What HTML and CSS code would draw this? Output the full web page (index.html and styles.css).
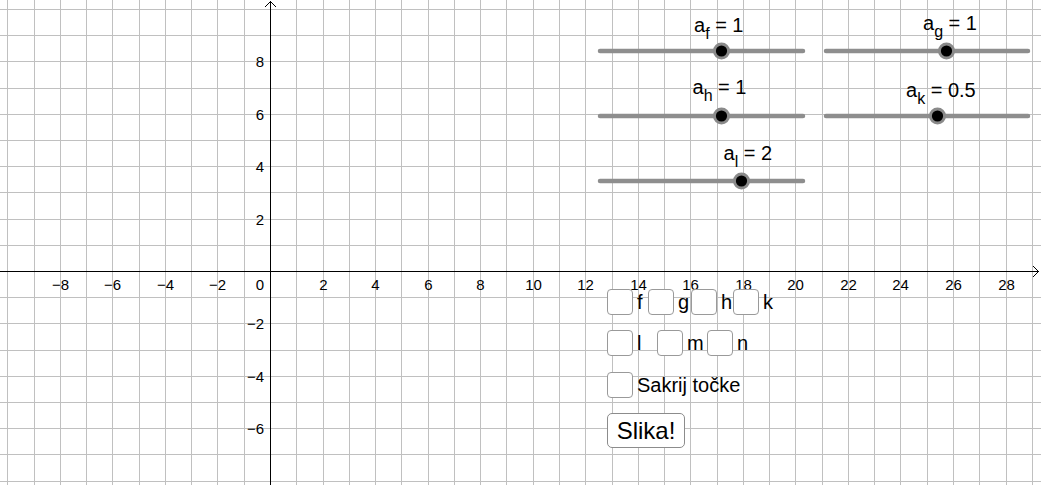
FILE: index.html
```html
<!DOCTYPE html>
<html lang="hr">
<head>
<meta charset="utf-8">
<title>GeoGebra</title>
<link rel="stylesheet" href="styles.css">
</head>
<body>
<div class="applet">
  <svg class="canvas" width="1041" height="485" viewBox="0 0 1041 485" xmlns="http://www.w3.org/2000/svg">
    <path class="grid" d="M7.5 0V485M34.5 0V485M60.5 0V485M86.5 0V485M112.5 0V485M139.5 0V485M165.5 0V485M191.5 0V485M217.5 0V485M244.5 0V485M296.5 0V485M323.5 0V485M349.5 0V485M375.5 0V485M401.5 0V485M428.5 0V485M454.5 0V485M480.5 0V485M506.5 0V485M533.5 0V485M559.5 0V485M585.5 0V485M612.5 0V485M638.5 0V485M664.5 0V485M690.5 0V485M717.5 0V485M743.5 0V485M769.5 0V485M795.5 0V485M822.5 0V485M848.5 0V485M874.5 0V485M900.5 0V485M927.5 0V485M953.5 0V485M979.5 0V485M1006.5 0V485M1032.5 0V485M0 9.5H1041M0 35.5H1041M0 61.5H1041M0 88.5H1041M0 114.5H1041M0 140.5H1041M0 166.5H1041M0 192.5H1041M0 219.5H1041M0 245.5H1041M0 297.5H1041M0 323.5H1041M0 350.5H1041M0 376.5H1041M0 402.5H1041M0 428.5H1041M0 454.5H1041M0 481.5H1041"/>
    <path class="axis" d="M270.5 1V485M0 271.5H1039M265 7L270.5 1.5L276 7M1033 266L1038.5 271.5L1033 277"/>
    <g class="ax-x">
      <text x="60.5" y="290">−8</text>
      <text x="112.5" y="290">−6</text>
      <text x="165.5" y="290">−4</text>
      <text x="217.5" y="290">−2</text>
      <text x="323.5" y="290">2</text>
      <text x="375.5" y="290">4</text>
      <text x="428.5" y="290">6</text>
      <text x="480.5" y="290">8</text>
      <text x="533.5" y="290">10</text>
      <text x="585.5" y="290">12</text>
      <text x="638.5" y="290">14</text>
      <text x="690.5" y="290">16</text>
      <text x="743.5" y="290">18</text>
      <text x="795.5" y="290">20</text>
      <text x="848.5" y="290">22</text>
      <text x="900.5" y="290">24</text>
      <text x="953.5" y="290">26</text>
      <text x="1006.5" y="290">28</text>
    </g>
    <g class="ax-y">
      <text x="264" y="290">0</text>
      <text x="264" y="67">8</text>
      <text x="264" y="120">6</text>
      <text x="264" y="172">4</text>
      <text x="264" y="225">2</text>
      <text x="264" y="329">−2</text>
      <text x="264" y="382">−4</text>
      <text x="264" y="434">−6</text>
    </g>
    <g class="sliders">
      <path class="track" d="M600 51H803M826 51H1028M600 116H803M826 116H1028M600 181H803"/>
      <g class="knob"><circle class="ring" cx="721.5" cy="51" r="8.5"/><circle class="dot" cx="721.5" cy="51" r="5.6"/></g>
      <g class="knob"><circle class="ring" cx="946.5" cy="51" r="8.5"/><circle class="dot" cx="946.5" cy="51" r="5.6"/></g>
      <g class="knob"><circle class="ring" cx="721.5" cy="116" r="8.5"/><circle class="dot" cx="721.5" cy="116" r="5.6"/></g>
      <g class="knob"><circle class="ring" cx="937.5" cy="116" r="8.5"/><circle class="dot" cx="937.5" cy="116" r="5.6"/></g>
      <g class="knob"><circle class="ring" cx="741.5" cy="181" r="8.5"/><circle class="dot" cx="741.5" cy="181" r="5.6"/></g>
      <text class="sl" x="694" y="32">a<tspan class="sub" dy="7">f</tspan><tspan dy="-7"> = 1</tspan></text>
      <text class="sl" x="923" y="29.5">a<tspan class="sub" dy="7">g</tspan><tspan dy="-7"> = 1</tspan></text>
      <text class="sl" x="692.5" y="94">a<tspan class="sub" dy="7">h</tspan><tspan dy="-7"> = 1</tspan></text>
      <text class="sl" x="906" y="97">a<tspan class="sub" dy="7">k</tspan><tspan dy="-7"> = 0.5</tspan></text>
      <text class="sl" x="723.5" y="160">a<tspan class="sub" dy="7">l</tspan><tspan dy="-7"> = 2</tspan></text>
    </g>
  </svg>

  <label class="cb cb-f"><span class="box"></span><span class="txt">f</span></label>
  <label class="cb cb-g"><span class="box"></span><span class="txt">g</span></label>
  <label class="cb cb-h"><span class="box"></span><span class="txt">h</span></label>
  <label class="cb cb-k"><span class="box"></span><span class="txt">k</span></label>
  <label class="cb cb-l"><span class="box"></span><span class="txt">l</span></label>
  <label class="cb cb-m"><span class="box"></span><span class="txt">m</span></label>
  <label class="cb cb-n"><span class="box"></span><span class="txt">n</span></label>
  <label class="cb cb-s"><span class="box"></span><span class="txt">Sakrij točke</span></label>
  <button class="btn" type="button">Slika!</button>
</div>
</body>
</html>
```

FILE: styles.css
```css
html, body {
  margin: 0;
  padding: 0;
  background: #ffffff;
}

.applet {
  position: relative;
  width: 1041px;
  height: 485px;
  overflow: hidden;
  background: #ffffff;
  font-family: "Liberation Sans", Arial, sans-serif;
  color: #000000;
}

.canvas {
  display: block;
}

.grid {
  fill: none;
  stroke: #c0c0c0;
  stroke-width: 1;
  shape-rendering: crispEdges;
}

.axis {
  fill: none;
  stroke: #000000;
  stroke-width: 1;
}

.ax-x text,
.ax-y text {
  font-family: "Liberation Sans", Arial, sans-serif;
  font-size: 15px;
  fill: #000000;
}

.ax-x text {
  text-anchor: middle;
}

.ax-y text {
  text-anchor: end;
}

.track {
  fill: none;
  stroke: #8e8e8e;
  stroke-width: 4.5;
  stroke-linecap: round;
}

.ring {
  fill: #8a8a8a;
}

.dot {
  fill: #000000;
}

.sl {
  font-family: "Liberation Sans", Arial, sans-serif;
  font-size: 20px;
  fill: #000000;
}

.sl .sub {
  font-size: 16px;
}

/* checkboxes: free objects on the applet canvas */
.cb {
  position: absolute;
  display: flex;
  align-items: center;
  gap: 4px;
  font-size: 20px;
  line-height: 26px;
  white-space: nowrap;
}

.box {
  display: block;
  width: 26px;
  height: 26px;
  box-sizing: border-box;
  border: 1px solid #9a9a9a;
  border-radius: 4px;
  background: #ffffff;
}

.cb-f { left: 607px; top: 289px; }
.cb-g { left: 648px; top: 289px; }
.cb-h { left: 691px; top: 289px; }
.cb-k { left: 733px; top: 289px; }
.cb-l { left: 607px; top: 330px; }
.cb-m { left: 657px; top: 330px; }
.cb-n { left: 707px; top: 330px; }
.cb-s { left: 607px; top: 372px; }

.btn {
  position: absolute;
  left: 607px;
  top: 413px;
  width: 78px;
  height: 35px;
  box-sizing: border-box;
  padding: 0;
  border: 1px solid #8c8c8c;
  border-radius: 5px;
  background: #ffffff;
  font-family: "Liberation Sans", Arial, sans-serif;
  font-size: 24px;
  line-height: 33px;
  color: #000000;
  text-align: center;
}
```
